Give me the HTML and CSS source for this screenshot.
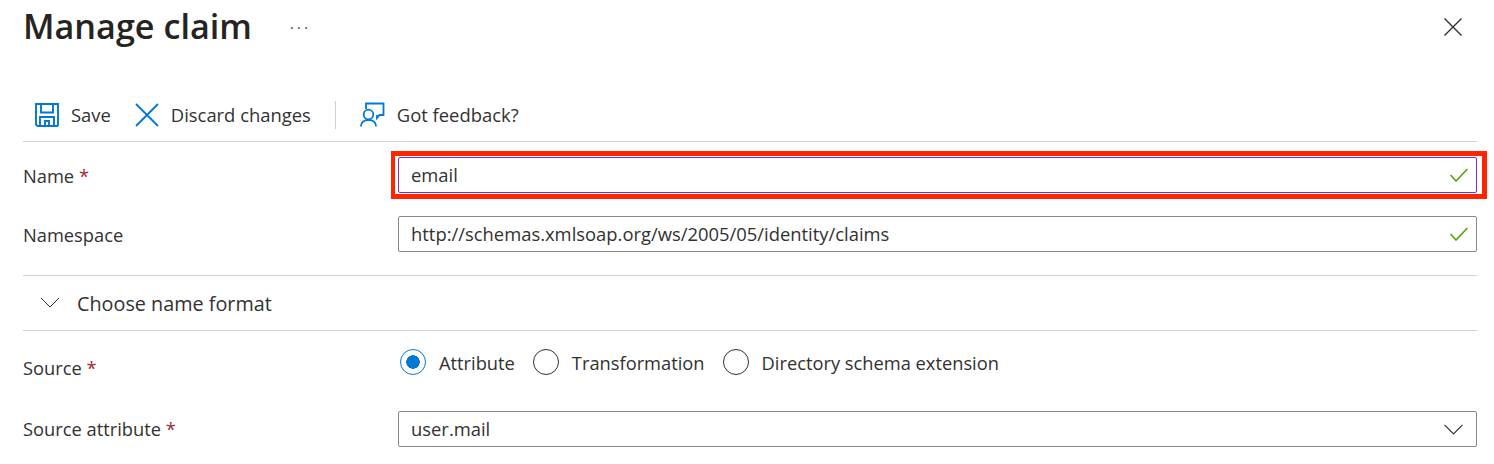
FILE: index.html
```html
<!DOCTYPE html>
<html lang="en">
<head>
  <meta charset="UTF-8" />
  <title>Manage claim</title>
  <link rel="stylesheet" href="styles.css">
</head>
<body>
  <div class="panel">
    <div class="header">
      <h1>Manage claim</h1>
      <span class="more">···</span>
      <svg class="close" width="18" height="18" viewBox="0 0 18 18"><path d="M.5.5l17 17M17.500.5l-17 17" stroke="#323130" stroke-width="1.4" fill="none"/></svg>
    </div>

    <div class="toolbar">
      <button class="tool">
        <svg width="24" height="24" viewBox="0 0 24 24" fill="none" stroke="#0078d4" stroke-width="1.9"><path d="M1 1h22v21.200l-.8.8H2.500L1 21.500z"/><path d="M6 1v8.500h12V1M5 23v-9h14v9M10 23v-5h4v5"/></svg>
        Save
      </button>
      <button class="tool">
        <svg width="24" height="24" viewBox="0 0 24 24" fill="none" stroke="#0078d4" stroke-width="1.8"><path d="M1 1l22 22M23 1L1 23"/></svg>
        Discard changes
      </button>
      <span class="sep"></span>
      <button class="tool">
        <svg width="25" height="25" viewBox="0 0 25 25" fill="none" stroke="#0078d4" stroke-width="1.8"><path d="M6 7V1.500h17.500V13h-4l-2.500 3v-3"/><circle cx="8.500" cy="12.500" r="4.800"/><path d="M.9 24.500c0-4 3-6.500 7.600-6.500s7.600 2.500 7.600 6.500"/></svg>
        Got feedback?
      </button>
    </div>

    <div class="row row-name">
      <label>Name <span class="req">*</span></label>
      <div class="field field-active">
        <input type="text" value="email">
        <svg width="18" height="14" viewBox="0 0 18 14" fill="none" stroke="#57a300" stroke-width="1.6"><path d="M.6 7l5.400 6L17.400 1"/></svg>
        <span class="highlight"></span>
      </div>
    </div>
    <div class="row row-ns">
      <label>Namespace</label>
      <div class="field">
        <input type="text" value="http://schemas.xmlsoap.org/ws/2005/05/identity/claims">
        <svg width="18" height="14" viewBox="0 0 18 14" fill="none" stroke="#57a300" stroke-width="1.6"><path d="M.6 7l5.400 6L17.400 1"/></svg>
      </div>
    </div>

    <div class="collapse">
      <svg width="20" height="12" viewBox="0 0 20 12" fill="none" stroke="#323130" stroke-width="1"><path d="M1 1l9 9 9-9"/></svg>
      Choose name format
    </div>

    <div class="row row-source">
      <label>Source <span class="req">*</span></label>
      <div class="radios">
        <span class="radio"><i class="dot dot-on"></i>Attribute</span>
        <span class="radio"><i class="dot"></i>Transformation</span>
        <span class="radio"><i class="dot"></i>Directory schema extension</span>
      </div>
    </div>
    <div class="row row-attr">
      <label>Source attribute <span class="req">*</span></label>
      <div class="field field-select">
        <input type="text" value="user.mail">
        <svg width="19" height="11" viewBox="0 0 19 11" fill="none" stroke="#323130" stroke-width="1.2"><path d="M.5.8l9 9 9-9"/></svg>
      </div>
    </div>
  </div>
</body>
</html>
```

FILE: styles.css
```css
* {
  box-sizing: border-box;
}
html, body {
  margin: 0;
  background: #fff;
  overflow: hidden;
}
body {
  font-family: "Open Sans", "Noto Sans", sans-serif;
  font-size: 18.3px;
  color: #323130;
}
.panel {
  height: 464px;
  padding: 0 17px 0 23px;
}
.header {
  display: flex;
  align-items: center;
  height: 54px;
}
h1 {
  margin: -4px 0 0;
  font-size: 34.200px;
  font-weight: 600;
  color: #252423;
}
.more {
  margin-left: 38px;
  font-size: 14px;
  letter-spacing: 3.500px;
}
.close {
  margin-left: auto;
  margin-right: 15px;
}
.toolbar {
  display: flex;
  align-items: center;
  height: 88px;
  padding: 34px 0 0 12px;
  border-bottom: 1px solid #d2d0ce;
  font-size: 18.400px;
}
.tool {
  display: flex;
  align-items: center;
  gap: 12px;
  padding: 0;
  margin-right: 24px;
  border: 0;
  background: none;
  font: inherit;
  color: inherit;
}
.sep {
  width: 1px;
  height: 28px;
  margin-right: 24px;
  background: #d2d0ce;
}
.row {
  display: grid;
  grid-template-columns: 375px 1fr;
  align-items: center;
}
.row-name {
  margin-top: 15px;
}
.row-ns {
  margin-top: 23px;
}
.row-source {
  height: 62px;
  margin-top: 6px;
}
.row-source label,
.row-attr label {
  margin-top: -2px;
}
.row-attr {
  margin-top: 12px;
}
.req {
  color: #a4262c;
}
.field {
  position: relative;
  display: flex;
  align-items: center;
  height: 36px;
  padding: 0 8px 0 12px;
  border: 1px solid #8a8886;
  border-radius: 2px;
  font-size: 18.400px;
}
.field-active {
  border-color: #8a2da5;
}
.field-select {
  padding-right: 13px;
}
.field input {
  flex: 1;
  margin-top: -2px;
  border: 0;
  outline: 0;
  padding: 0;
  font: inherit;
  color: inherit;
  background: none;
}
.highlight {
  position: absolute;
  inset: -7px -11px -7px -8px;
  border: 5px solid #ff2500;
  border-left-width: 4px;
  pointer-events: none;
}
.collapse {
  display: flex;
  align-items: center;
  gap: 17px;
  height: 56px;
  margin-top: 23px;
  padding-left: 17px;
  border-top: 1px solid #d2d0ce;
  border-bottom: 1px solid #d2d0ce;
  font-size: 19.800px;
}
.radios {
  display: flex;
  gap: 18px;
  margin-top: -12px;
  margin-left: 2px;
}
.radio {
  display: flex;
  align-items: center;
  gap: 13px;
}
.dot {
  width: 26px;
  height: 26px;
  border: 1px solid #323130;
  border-radius: 50%;
}
.dot-on {
  border-color: #0078d4;
  background: radial-gradient(circle, #0078d4 0 6.500px, #fff 7px);
}
```
